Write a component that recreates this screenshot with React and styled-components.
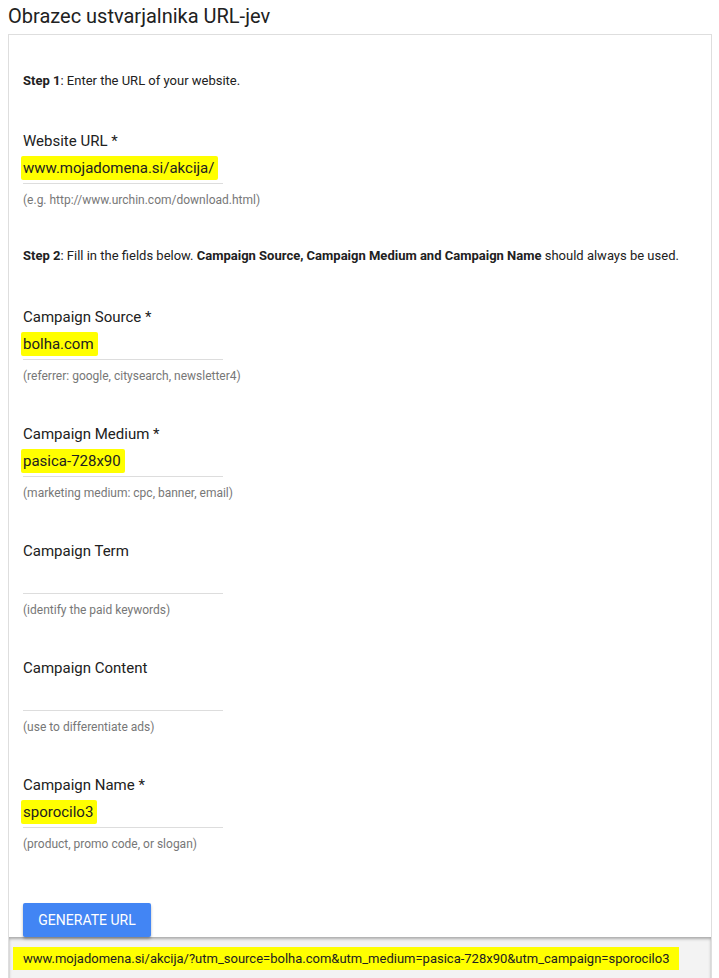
import React from "react";
import styled, { createGlobalStyle } from "styled-components";

const Global = createGlobalStyle`
  html, body { margin: 0; padding: 0; background: #fff; }
  body { font-family: Roboto, "Liberation Sans", Arial, sans-serif; color: #212121; }
`;

const Page = styled.div`
  padding: 0 7px 0 8px;
`;

const Title = styled.h1`
  margin: 0;
  font-size: 20px;
  font-weight: 400;
  line-height: 30px;
  color: #212121;
  padding-top: 1px;
  height: 34px;
  box-sizing: border-box;
`;

const Card = styled.div`
  border: 1px solid #dedede;
  border-bottom: none;
  background: #fff;
`;

const Body = styled.div`
  padding: 38px 14px 0 14px;
`;

const Step = styled.p`
  margin: ${(p) => p.$top}px 0 0 0;
  font-size: 13px;
  line-height: 16px;
  color: #212121;
  b { font-weight: 700; }
`;

const Field = styled.div`
  margin-top: ${(p) => p.$top}px;
  width: 200px;
`;

const Label = styled.div`
  font-size: 15px;
  line-height: 20px;
  color: #212121;
  margin-bottom: 7px;
`;

const Input = styled.div`
  height: 20px;
  padding-bottom: 5px;
  border-bottom: 1px solid #dddddd;
  font-size: 15px;
  line-height: 20px;
  color: #212121;
  white-space: nowrap;
`;

const Highlight = styled.span`
  background: #ffff00;
  margin-left: -2px;
  padding: 3px 4px 3px 2px;
  border-radius: 2px;
`;

const Helper = styled.div`
  margin-top: 9px;
  font-size: 12px;
  line-height: 14px;
  color: #777;
  white-space: nowrap;
`;

const Button = styled.button`
  margin-top: 52px;
  display: block;
  width: 128px;
  height: 34px;
  border: none;
  border-radius: 2px;
  background: #4285f4;
  color: #fff;
  font-family: Roboto, "Liberation Sans", Arial, sans-serif;
  font-size: 14px;
  font-weight: 400;
  box-shadow: 0 2px 3px rgba(0, 0, 0, 0.28);
  position: relative;
  z-index: 1;
  cursor: pointer;
`;

const Footer = styled.div`
  background: #f3f3f3;
  box-shadow: inset 0 2px 3px rgba(0, 0, 0, 0.3);
  height: 42px;
  padding: 0 14px;
  display: flex;
  align-items: center;
  font-size: 13px;
  color: #212121;
  white-space: nowrap;
`;

const FooterHighlight = styled.span`
  background: #ffff00;
  margin-left: -10px;
  padding: 4px 10px;
`;

const fields = [
  { label: "Website URL *", value: "www.mojadomena.si/akcija/", help: "(e.g. http://www.urchin.com/download.html)" },
];

const campaign = [
  { label: "Campaign Source *", value: "bolha.com", help: "(referrer: google, citysearch, newsletter4)" },
  { label: "Campaign Medium *", value: "pasica-728x90", help: "(marketing medium: cpc, banner, email)" },
  { label: "Campaign Term", value: "", help: "(identify the paid keywords)" },
  { label: "Campaign Content", value: "", help: "(use to differentiate ads)" },
  { label: "Campaign Name *", value: "sporocilo3", help: "(product, promo code, or slogan)" },
];

function FormField({ label, value, help, top }) {
  return (
    <Field $top={top}>
      <Label>{label}</Label>
      <Input>{value ? <Highlight>{value}</Highlight> : null}</Input>
      <Helper>{help}</Helper>
    </Field>
  );
}

export default function App() {
  return (
    <>
      <Global />
      <Page>
        <Title>Obrazec ustvarjalnika URL-jev</Title>
        <Card>
          <Body>
            <Step $top={0}>
              <b>Step 1</b>: Enter the URL of your website.
            </Step>
            {fields.map((f) => (
              <FormField key={f.label} {...f} top={42} />
            ))}
            <Step $top={41}>
              <b>Step 2</b>: Fill in the fields below. <b>Campaign Source, Campaign Medium and Campaign Name</b> should always be used.
            </Step>
            {campaign.map((f, i) => (
              <FormField key={f.label} {...f} top={i === 0 ? 43 : 41} />
            ))}
            <Button>GENERATE URL</Button>
          </Body>
          <Footer>
            <FooterHighlight>
              www.mojadomena.si/akcija/?utm_source=bolha.com&amp;utm_medium=pasica-728x90&amp;utm_campaign=sporocilo3
            </FooterHighlight>
          </Footer>
        </Card>
      </Page>
    </>
  );
}
